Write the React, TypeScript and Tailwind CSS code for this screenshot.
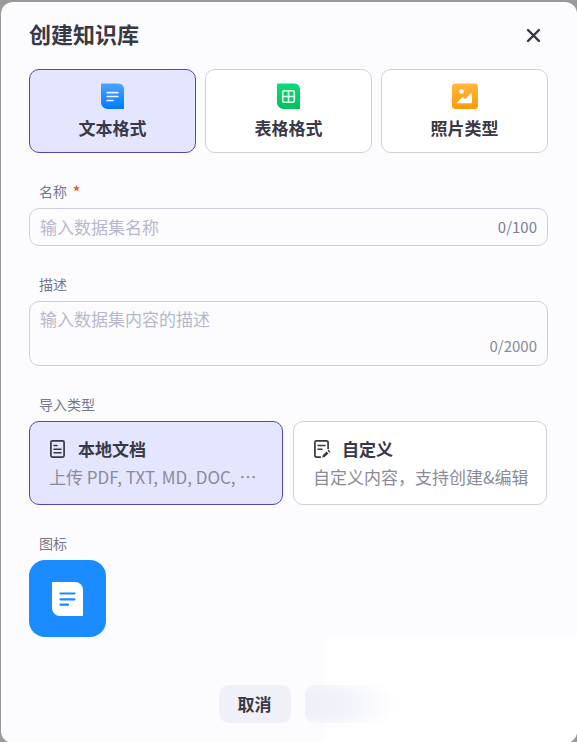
import { useState } from 'react'
import type { ReactNode } from 'react'
import clsx from 'clsx'

const formats = [
  { id: 'text', label: '文本格式', icon: <TextIcon /> },
  { id: 'table', label: '表格格式', icon: <TableIcon /> },
  { id: 'photo', label: '照片类型', icon: <PhotoIcon /> },
]

const importTypes = [
  {
    id: 'local',
    label: '本地文档',
    description: '上传 PDF, TXT, MD, DOC, ⋯',
    icon: <DocumentIcon />,
  },
  {
    id: 'custom',
    label: '自定义',
    description: '自定义内容，支持创建&编辑',
    icon: <EditIcon />,
  },
]

export default function App() {
  const [format, setFormat] = useState('text')
  const [importType, setImportType] = useState('local')
  const [name, setName] = useState('')
  const [description, setDescription] = useState('')

  return (
    <div
      lang="zh-CN"
      className="min-h-screen bg-[#999999] pt-0.5 pl-px font-['Noto_Sans_CJK_SC',sans-serif] text-[#383846]"
    >
      <main className="relative isolate flex min-h-[calc(100vh-2px)] flex-col overflow-hidden rounded-xl bg-[#fcfcff] pr-[29px] pb-5 pl-7">
        <header className="flex h-[67px] items-center justify-between pr-[3px]">
          <h1 className="pb-1.5 text-[22px] leading-8 font-bold">创建知识库</h1>
          <button type="button" aria-label="关闭" className="p-1">
            <CloseIcon />
          </button>
        </header>

        <form className="flex flex-1 flex-col gap-7">
          <div className="grid grid-cols-3 gap-[9px]">
            {formats.map((item) => (
              <button
                key={item.id}
                type="button"
                aria-pressed={format === item.id}
                onClick={() => setFormat(item.id)}
                className={clsx(
                  'flex h-21 flex-col items-center gap-[7px] rounded-[10px] border pt-3',
                  format === item.id
                    ? 'border-[#5147b8] bg-[#e4e6ff]'
                    : 'border-[#d0d0dc] bg-white'
                )}
              >
                {item.icon}
                <span className="text-[17px] leading-6 font-bold">
                  {item.label}
                </span>
              </button>
            ))}
          </div>

          <Field label="名称" htmlFor="name" required>
            <div className="flex h-[38px] items-center rounded-[10px] border border-[#cfcfdc] px-2.5">
              <input
                id="name"
                maxLength={100}
                value={name}
                onChange={(e) => setName(e.target.value)}
                placeholder="输入数据集名称"
                className="min-w-0 flex-1 text-[17px] leading-6 outline-none placeholder:text-[#b7b8cb]"
              />
              <span className="text-[15px] leading-6 text-[#7f7f92]">
                {name.length}/100
              </span>
            </div>
          </Field>

          <Field label="描述" htmlFor="description">
            <div className="flex flex-col rounded-[10px] border border-[#cfcfdc] px-2.5 pt-[5px] pb-[7px]">
              <textarea
                id="description"
                rows={1}
                maxLength={2000}
                value={description}
                onChange={(e) => setDescription(e.target.value)}
                placeholder="输入数据集内容的描述"
                className="block h-[27px] resize-none text-[17px] leading-6 outline-none placeholder:text-[#b7b8cb]"
              />
              <span className="text-right text-[15px] leading-6 text-[#8a8a94]">
                {description.length}/2000
              </span>
            </div>
          </Field>

          <Field label="导入类型">
            <div className="grid grid-cols-2 gap-2.5 pr-px">
              {importTypes.map((item) => (
                <button
                  key={item.id}
                  type="button"
                  aria-pressed={importType === item.id}
                  onClick={() => setImportType(item.id)}
                  className={clsx(
                    'flex h-21 min-w-0 flex-col justify-center gap-1 rounded-[10px] border pr-3 pl-[19px] text-left',
                    importType === item.id
                      ? 'border-[#5147b8] bg-[#e4e6ff]'
                      : 'border-[#d0d0dc] bg-white'
                  )}
                >
                  <span className="flex items-center gap-2.5 text-[17px] leading-6 font-bold">
                    {item.icon}
                    {item.label}
                  </span>
                  <span className="w-full truncate text-[17px] leading-6 text-[#8b8b98]">
                    {item.description}
                  </span>
                </button>
              ))}
            </div>
          </Field>

          <Field label="图标">
            <button
              type="button"
              aria-label="图标"
              className="flex size-[77px] items-center justify-center rounded-[16px] bg-[#1a8cff]"
            >
              <DatasetIcon />
            </button>
          </Field>
        </form>

        <footer className="mt-12 flex justify-center gap-3.5 pl-[42px]">
          <button
            type="button"
            className="h-[38px] w-18 rounded-[10px] bg-[#f0f0f8] text-[17px] font-bold"
          >
            取消
          </button>
          <button
            type="button"
            disabled
            aria-label="确定"
            className="h-[38px] w-24 rounded-l-[10px] bg-[radial-gradient(92px_36px_at_0_50%,#f0f0f8_25%,#f5f6fd_60%,transparent)]"
          />
        </footer>
        <div className="absolute -right-2 -bottom-2 -z-10 h-[114px] w-[45%] bg-white blur-[2px]" />
      </main>
    </div>
  )
}

type FieldProps = {
  label: string
  htmlFor?: string
  required?: boolean
  children: ReactNode
}

function Field({ label, htmlFor, required, children }: FieldProps) {
  const className =
    'flex gap-1.5 pl-2.5 text-sm leading-5 text-[#77778b]'
  return (
    <div className="flex flex-col gap-[7px]">
      {htmlFor ? (
        <label htmlFor={htmlFor} className={className}>
          {label}
          {required && <span className="font-bold text-[#f0502f]">*</span>}
        </label>
      ) : (
        <span className={className}>{label}</span>
      )}
      {children}
    </div>
  )
}

function CloseIcon() {
  return (
    <svg width="15" height="15" viewBox="0 0 15 15" fill="none">
      <path
        d="M2 2l11 11M13 2L2 13"
        stroke="#343440"
        strokeWidth="2.4"
        strokeLinecap="round"
      />
    </svg>
  )
}

function TextIcon() {
  return (
    <svg width="26" height="27" viewBox="0 0 26 27" fill="none">
      <defs>
        <linearGradient id="blue" x1="0" y1="0" x2="0" y2="1">
          <stop stopColor="#4ba3ff" />
          <stop offset="1" stopColor="#007bff" />
        </linearGradient>
      </defs>
      <path
        d="M2 1.500h16.500A5.500 5.500 0 0 1 24 7v20H7.500A6.500 6.500 0 0 1 1 20.500v-18a1 1 0 0 1 1-1z"
        fill="url(#blue)"
      />
      <path
        d="M7.200 10.600h10.600M7.200 14.500h10.600M7.200 18.500h6"
        stroke="#eaf5ff"
        strokeWidth="1.700"
        strokeLinecap="round"
      />
    </svg>
  )
}

function TableIcon() {
  return (
    <svg width="26" height="27" viewBox="0 0 26 27" fill="none">
      <defs>
        <linearGradient id="green" x1="0" y1="0" x2="0" y2="1">
          <stop stopColor="#09dc79" />
          <stop offset="1" stopColor="#00c255" />
        </linearGradient>
      </defs>
      <path
        d="M2 1.500h16.500A5.500 5.500 0 0 1 24 7v20H7.500A6.500 6.500 0 0 1 1 20.500v-18a1 1 0 0 1 1-1z"
        fill="url(#green)"
      />
      <rect x="6.700" y="8.700" width="11.600" height="11.600" rx="1.500" stroke="#eafff3" strokeWidth="1.600" />
      <path d="M12.500 9v11M7 14.500h11" stroke="#eafff3" strokeWidth="1.600" />
    </svg>
  )
}

function PhotoIcon() {
  return (
    <svg width="26" height="27" viewBox="0 0 26 27" fill="none">
      <defs>
        <linearGradient id="orange" x1="0" y1="0" x2="0" y2="1">
          <stop stopColor="#ffb73c" />
          <stop offset="1" stopColor="#ff9c06" />
        </linearGradient>
      </defs>
      <rect y="1.500" width="26" height="25.500" rx="3.500" fill="url(#orange)" />
      <circle cx="9.500" cy="9.500" r="2.300" fill="#fff" />
      <path
        d="M5.300 20.300l4.900-4.800a.8.8 0 0 1 1.100 0l1.900 1.600 5.400-5.400c.5-.5 1.300-.2 1.300.5v8.300c0 .5-.3.800-.8.800H5.800c-.8 0-1-.5-.5-1z"
        fill="#fff"
      />
    </svg>
  )
}

function DocumentIcon() {
  return (
    <svg width="19" height="20" viewBox="0 0 19 20" fill="none" stroke="#383743">
      <rect x="1.900" y="1.900" width="13.200" height="16.200" rx="1.500" strokeWidth="1.700" />
      <path
        d="M5 6.500h3M5 10.200h7M5 13.700h7"
        strokeWidth="1.500"
        strokeLinecap="round"
      />
    </svg>
  )
}

function EditIcon() {
  return (
    <svg width="19" height="20" viewBox="0 0 19 20" fill="none" stroke="#383743">
      <path
        d="M7.300 18.100H3.400a1.500 1.500 0 0 1-1.500-1.500V3.400a1.500 1.500 0 0 1 1.500-1.500h10.200a1.500 1.500 0 0 1 1.500 1.500v6"
        strokeWidth="1.700"
        strokeLinecap="round"
      />
      <path d="M5 6.500h7M5 10.300h4" strokeWidth="1.500" strokeLinecap="round" />
      <path d="M9.200 18.600l.5-2.400 3.900-3.600 1.800 1.900-3.800 3.600zM14.600 11.800l1.100-1 1.700 1.900-1 1z" fill="#383743" stroke="none" />
    </svg>
  )
}

function DatasetIcon() {
  return (
    <svg width="31" height="34" viewBox="0 0 31 34" fill="none">
      <path
        d="M1 0h22a8 8 0 0 1 8 8v26H8a8 8 0 0 1-8-8V1a1 1 0 0 1 1-1z"
        fill="#fff"
      />
      <path
        d="M8.500 11.500h14M8.500 17.300h14M8.500 22.700h7.500"
        stroke="#1a8cff"
        strokeWidth="2.200"
        strokeLinecap="round"
      />
    </svg>
  )
}
